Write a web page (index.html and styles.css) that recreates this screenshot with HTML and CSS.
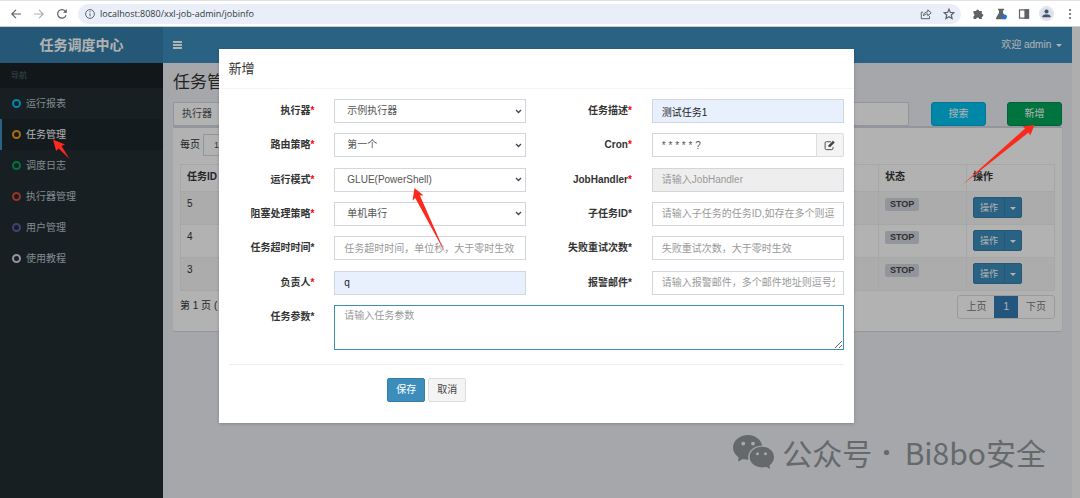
FILE: index.html
```html
<!DOCTYPE html>
<html lang="zh-CN">
<head>
<meta charset="utf-8">
<title>任务调度中心</title>
<link rel="stylesheet" href="styles.css">
</head>
<body>
<header class="browser">
  <button class="tool" type="button" aria-label="Back"><svg viewBox="0 0 12 12"><path d="M11 6H2M6 1.8 1.8 6 6 10.2"/></svg></button>
  <button class="tool tool-off" type="button" aria-label="Forward"><svg viewBox="0 0 12 12"><path d="M1 6h9M6 1.8 10.2 6 6 10.2"/></svg></button>
  <button class="tool" type="button" aria-label="Reload"><svg viewBox="0 0 12 12"><path d="M10 7.2A4.3 4.3 0 1 1 9.2 3.1L10.4 4.4"/><path d="M10.8 1v3.8H7z" fill="#5f6368" stroke="none"/></svg></button>
  <div class="address">
    <svg class="info" viewBox="0 0 12 12"><circle cx="6" cy="6" r="4.4"/><path d="M6 5.4v3M6 3.2v1.2"/></svg>
    <input class="url" type="text" aria-label="Address" value="localhost:8080/xxl-job-admin/jobinfo">
    <button class="tool" type="button" aria-label="Share"><svg class="thin" viewBox="0 0 12 12"><path d="M3 4.2H1.3v6.500h8.200V8.200M3.400 8c.2-2.800 1.800-4.200 4.400-4.200V1.800l3.400 3-3.400 3V5.900C5.800 5.900 4.400 6.600 3.400 8z"/></svg></button>
    <button class="tool" type="button" aria-label="Bookmark"><svg viewBox="0 0 12 12"><path d="M6 1.200l1.400 3.200 3.500.3-2.600 2.300.8 3.500L6 8.700l-3.100 1.800.8-3.500L1.100 4.700l3.500-.3z"/></svg></button>
  </div>
  <div class="extensions">
    <button class="tool" type="button" aria-label="Extensions"><svg viewBox="0 0 12 12"><path fill="#5f6368" stroke="none" d="M1.500 3h2.700a1.500 1.500 0 1 1 3 0h2.600v2.700a1.500 1.500 0 1 1 0 3V11H7.200a1.500 1.500 0 0 0-3 0H1.500V8.300a1.500 1.500 0 0 0 0-2.800z"/></svg></button>
    <button class="tool" type="button" aria-label="Labs"><svg viewBox="0 0 12 12"><path fill="#5f6368" stroke="none" d="M3 .8h6v1.400H8v2.600l3 5.200c.3.600 0 1.200-.6 1.200H1.600C1 11.200.7 10.600 1 10l3-5.200V2.200H3z"/><circle cx="9.600" cy="8.800" r="2.400" fill="#1a73e8" stroke="none"/></svg></button>
    <button class="tool" type="button" aria-label="Side panel"><svg viewBox="0 0 12 12"><path d="M1.500 1.800h9v8.400h-9z"/><path d="M7 1.800h3.500v8.400H7z" fill="#5f6368"/></svg></button>
    <button class="tool profile" type="button" aria-label="Profile"><svg viewBox="0 0 12 12"><g fill="#45546b" stroke="none"><circle cx="6" cy="3.800" r="2.200"/><path d="M1.600 10.200V9c0-1.500 2.600-2.300 4.400-2.300s4.400.8 4.400 2.300v1.200z"/></g></svg></button>
    <button class="tool" type="button" aria-label="Menu"><svg viewBox="0 0 12 12"><g fill="#5f6368" stroke="none"><circle cx="6" cy="2" r="1.100"/><circle cx="6" cy="6" r="1.100"/><circle cx="6" cy="10" r="1.100"/></g></svg></button>
  </div>
</header>

<div class="app">
  <aside class="sidebar">
    <a class="logo" href="#">任务调度中心</a>
    <div class="nav-title">导航</div>
    <nav class="nav">
      <a class="nav-item" href="#"><i class="ring ring-aqua"></i>运行报表</a>
      <a class="nav-item active" href="#"><i class="ring ring-yellow"></i>任务管理</a>
      <a class="nav-item" href="#"><i class="ring ring-green"></i>调度日志</a>
      <a class="nav-item" href="#"><i class="ring ring-red"></i>执行器管理</a>
      <a class="nav-item" href="#"><i class="ring ring-purple"></i>用户管理</a>
      <a class="nav-item" href="#"><i class="ring ring-gray"></i>使用教程</a>
    </nav>
  </aside>
  <div class="main">
    <div class="navbar">
      <button class="burger" type="button" aria-label="Toggle navigation"><i></i><i></i><i></i></button>
      <a class="user" href="#">欢迎 admin <i class="caret"></i></a>
    </div>
    <div class="content">
      <h1 class="title">任务管理</h1>
      <div class="filters">
        <div class="filter"><span class="addon">执行器</span></div>
        <button class="btn btn-search" type="button">搜索</button>
        <button class="btn btn-add" type="button">新增</button>
      </div>
      <section class="box">
        <div class="length"><label for="size">每页</label><select id="size" class="size"><option>10</option></select></div>
        <table class="jobs">
          <thead><tr><th class="col-id">任务ID</th><th></th><th class="col-state">状态</th><th class="col-op">操作</th></tr></thead>
          <tbody>
            <tr><td>5</td><td></td><td><span class="badge">STOP</span></td><td><div class="group"><button class="op" type="button">操作</button><button class="op op-more" type="button" aria-label="更多"><i class="caret"></i></button></div></td></tr>
            <tr><td>4</td><td></td><td><span class="badge">STOP</span></td><td><div class="group"><button class="op" type="button">操作</button><button class="op op-more" type="button" aria-label="更多"><i class="caret"></i></button></div></td></tr>
            <tr><td>3</td><td></td><td><span class="badge">STOP</span></td><td><div class="group"><button class="op" type="button">操作</button><button class="op op-more" type="button" aria-label="更多"><i class="caret"></i></button></div></td></tr>
          </tbody>
        </table>
        <div class="table-foot">
          <span>第 1 页 (</span>
          <div class="pages"><a href="#">上页</a><a class="current" href="#">1</a><a href="#">下页</a></div>
        </div>
      </section>
    </div>
  </div>
  <div class="scrollbar"></div>
  <div class="backdrop"></div>

  <div class="modal" role="dialog" aria-labelledby="modal-title">
    <h2 class="modal-title" id="modal-title">新增</h2>
    <form class="form">
      <div class="fields">
        <label for="f1">执行器<b>*</b></label>
        <div class="cell"><select id="f1" class="control"><option>示例执行器</option></select></div>
        <label for="f2">任务描述<b>*</b></label>
        <div class="cell"><input id="f2" class="control filled" type="text" value="测试任务1"></div>

        <label for="f3">路由策略<b>*</b></label>
        <div class="cell"><select id="f3" class="control"><option>第一个</option></select></div>
        <label for="f4">Cron<b>*</b></label>
        <div class="cell cron"><input id="f4" class="control" type="text" value="* * * * * ?"><button class="edit" type="button" aria-label="编辑"><svg viewBox="0 0 12 12"><path d="M7.500 1.900H2.500A1.300 1.300 0 0 0 1.200 3.200v6a1.300 1.300 0 0 0 1.300 1.300h6A1.300 1.300 0 0 0 9.800 9.200V7.600"/><path fill="#444" stroke="none" d="M9.800.8l1.900 1.900-4.900 4.900H4.900V5.700z"/></svg></button></div>

        <label for="f5">运行模式<b>*</b></label>
        <div class="cell"><select id="f5" class="control"><option>GLUE(PowerShell)</option></select></div>
        <label for="f6">JobHandler<b>*</b></label>
        <div class="cell"><input id="f6" class="control" type="text" placeholder="请输入JobHandler" disabled></div>

        <label for="f7">阻塞处理策略<b>*</b></label>
        <div class="cell"><select id="f7" class="control"><option>单机串行</option></select></div>
        <label for="f8">子任务ID*</label>
        <div class="cell"><input id="f8" class="control" type="text" placeholder="请输入子任务的任务ID,如存在多个则逗号分隔"></div>

        <label for="f9">任务超时时间*</label>
        <div class="cell"><input id="f9" class="control" type="text" placeholder="任务超时时间，单位秒，大于零时生效"></div>
        <label for="f10">失败重试次数*</label>
        <div class="cell"><input id="f10" class="control" type="text" placeholder="失败重试次数，大于零时生效"></div>

        <label for="f11">负责人<b>*</b></label>
        <div class="cell"><input id="f11" class="control filled" type="text" value="q"></div>
        <label for="f12">报警邮件*</label>
        <div class="cell"><input id="f12" class="control" type="text" placeholder="请输入报警邮件，多个邮件地址则逗号分隔"></div>
      </div>
      <div class="fields params">
        <label for="f13">任务参数*</label>
        <div class="cell wide"><textarea id="f13" class="control area" placeholder="请输入任务参数"></textarea></div>
      </div>
      <hr class="rule">
      <div class="actions">
        <button class="save" type="button">保存</button>
        <button class="cancel" type="button">取消</button>
      </div>
    </form>
  </div>

  <div class="watermark">
    <svg class="wechat" viewBox="0 0 42 34"><path fill="#66696b" d="M15 0C6.700 0 0 5.600 0 12.600c0 4 2.200 7.500 5.600 9.800L5 26.500l5-2.500c1.600.5 3.400.8 5.300.8C14 17 20 10.900 29.200 10.600 28 4.500 22 0 15 0z"/><path fill="#66696b" d="M29 11.800c-7 0-12.400 4.700-12.400 10.300S22 32.400 29 32.400c1.400 0 2.800-.2 4-.6l4.200 2.200-.8-3.600c2.900-1.900 4.600-4.900 4.600-8.300 0-5.600-5-10.300-12-10.300z"/><g fill="#a8abae"><circle cx="10.300" cy="8.600" r="1.900"/><circle cx="20" cy="8.600" r="1.900"/><circle cx="24.500" cy="18.800" r="1.500"/><circle cx="32.500" cy="18.800" r="1.500"/></g></svg>
    <span>公众号</span><span class="dot">·</span><span>Bi8bo安全</span>
  </div>
</div>

<svg class="arrows" viewBox="0 0 1080 498" width="1080" height="498" aria-hidden="true">
  <g fill="#fb2a1c">
    <path d="M53 139.500l12 5-3.400 1.400L69.500 159 58.700 148.400l-2.600 2.600z"/>
    <path d="M414.500 188l9 7.400-3.600.2L445.500 253.500 415.200 198l-2.700 2.800z"/>
    <path d="M1034.500 125l-4.200 10.600-1.800-3L962 185l63-56.400-2.300-2.400z"/>
  </g>
</svg>
</body>
</html>
```
FILE: styles.css
```css
* { box-sizing: border-box; }
body {
  margin: 0;
  min-height: 100vh;
  display: flex;
  flex-direction: column;
  font: 10px/14px "Liberation Sans", "Noto Sans CJK SC", sans-serif;
  color: #333;
  background: #fff;
}
button, input, select, textarea { font: inherit; color: inherit; margin: 0; }
a { color: inherit; text-decoration: none; }
svg { fill: none; stroke: #5f6368; stroke-width: 1.2; }

/* Browser toolbar */
.browser {
  display: flex;
  align-items: center;
  height: 27px;
  padding: 0 4px 0 9px;
  gap: 10px;
  border-top: 1px solid #dee1e6;
  border-bottom: 1px solid #c8cbd0;
}
.tool { display: flex; width: 13px; height: 13px; padding: 0; border: 0; background: none; align-items: center; justify-content: center; flex: none; }
.tool svg { width: 12px; height: 12px; }
.tool .thin { stroke-width: 1; }
.tool-off { opacity: .5; }
.address {
  flex: 1;
  display: flex;
  align-items: center;
  gap: 10px;
  height: 20px;
  padding: 0 6px;
  border-radius: 10px;
  background: #e9eef9;
}
.info { width: 12px; height: 12px; stroke-width: 1; }
.url { flex: 1; min-width: 0; margin-left: -6px; padding: 0; border: 0; background: none; color: #33363a; font-family: "Open Sans", sans-serif; font-size: 9px; }
.extensions { display: flex; gap: 10px; }
.profile { border-radius: 50%; background: #dbe0ea; outline: 1px solid #dbe0ea; }
.profile svg { width: 11px; height: 11px; }

/* Application frame */
.app { position: relative; flex: 1; display: flex; background: #ecf0f5; }
.sidebar { width: 163px; background: #222d32; color: #b8c7ce; }
.logo {
  display: flex;
  height: 36px;
  align-items: center;
  justify-content: center;
  background: #367fa9;
  color: #fff;
  font-size: 14px;
  font-weight: bold;
}
.nav-title { padding: 6px 11px; height: 25px; line-height: 14px; font-size: 8px; color: #4b646f; background: #1a2226; }
.nav-item { display: flex; align-items: center; height: 31px; padding-left: 10px; gap: 5px; border-left: 2px solid transparent; }
.nav-item.active { color: #fff; background: #1e282c; border-color: #3c8dbc; }
.ring { width: 9px; height: 9px; border: 2px solid; border-radius: 50%; }
.ring-aqua { color: #00c0ef; }
.ring-yellow { color: #f39c12; }
.ring-green { color: #00a65a; }
.ring-red { color: #dd4b39; }
.ring-purple { color: #605ca8; }
.ring-gray { color: #d2d6de; }

.main { flex: 1; min-width: 0; }
.navbar { display: flex; height: 36px; align-items: center; justify-content: space-between; padding: 0 10px; background: #3c8dbc; color: #fff; }
.burger { display: flex; flex-direction: column; gap: 1px; width: 9px; padding: 0; border: 0; background: none; }
.burger i { height: 2px; background: #fff; }
.caret { display: inline-block; margin-left: 2px; border: 3px solid transparent; border-top-color: currentColor; border-bottom: 0; vertical-align: middle; }
.content { padding: 8px 10px; }
.title { margin: 0; font-size: 17px; line-height: 24px; font-weight: normal; }
.filters { display: flex; align-items: stretch; height: 24px; margin-top: 7px; }
.filter { flex: 1; margin-right: 22px; background: #fff; border: 1px solid #d2d6de; }
.addon { display: block; padding: 4px 8px; color: #555; }
.btn { width: 55px; padding: 0; border: 1px solid #00acd6; border-radius: 3px; color: #fff; background: #00c0ef; }
.btn-add { margin-left: 21px; background: #00a65a; border-color: #008d4c; }

.box { padding: 6px 7px 12px; border-top: 2px solid #d2d6de; border-radius: 2px; background: #fff; box-shadow: 0 1px 1px rgba(0, 0, 0, .1); }
.length { display: flex; align-items: center; gap: 3px; height: 22px; }
.size { width: 50px; height: 22px; padding: 0 10px; border: 1px solid #d2d6de; background: #fff; color: #555; font-size: 9px; appearance: none; }
.jobs { width: 100%; margin-top: 8px; border-collapse: collapse; table-layout: fixed; }
.jobs th, .jobs td { padding: 5px 6px; border: 1px solid #f0f0f0; text-align: left; vertical-align: top; }
.jobs th { height: 27px; }
.jobs td { height: 33px; }
.jobs tbody tr:nth-child(odd) { background: #f7f7f7; }
.col-id { width: 80px; }
.col-state { width: 88px; }
.col-op { width: 88px; }
.badge { display: inline-block; padding: 0 5px; border-radius: 2px; line-height: 13px; margin-top: 1px; font-size: 9px; font-weight: bold; color: #444; background: #d2d6de; }
.group { display: flex; }
.op { width: 32px; height: 21px; padding: 0; font-size: 9px; color: #fff; background: #3c8dbc; border: 1px solid #367fa9; border-radius: 2px 0 0 2px; }
.op-more { width: 18px; margin-left: -1px; border-radius: 0 2px 2px 0; }
.op .caret { margin: 0; }
.table-foot { display: flex; justify-content: space-between; margin-top: 4px; line-height: 22px; }
.pages { display: flex; border: 1px solid #ddd; border-radius: 3px; color: #777; }
.pages a { padding: 0 8px; }
.pages .current { padding: 0 9px; color: #fff; background: #337ab7; }

.scrollbar { width: 8px; background: #fafafa; }
.backdrop { position: absolute; inset: 0; background: rgba(0, 0, 0, .3); }

/* Dialog */
.modal {
  position: absolute;
  top: 22px;
  left: 0;
  right: 8px;
  width: 635px;
  margin: 0 auto;
  background: #fff;
  box-shadow: 0 1px 3px rgba(0, 0, 0, .2);
}
.modal-title { margin: 0; padding: 10px; font-size: 13px; line-height: 19px; font-weight: normal; border-bottom: 1px solid #f4f4f4; }
.form { padding-top: 10px; }
.fields { display: grid; grid-template-columns: 2fr 4fr 2fr 4fr; grid-template-rows: repeat(6, 1fr); min-height: 206px; }
.fields label { padding: 5px 10px 0; text-align: right; font-weight: bold; white-space: nowrap; }
.fields b { color: #f00; }
.cell { min-width: 0; padding: 0 10px; }
.control { display: block; width: 100%; height: 24px; padding: 0 8px 0 9px; border: 1px solid #d2d6de; border-radius: 0; background: #fff; color: #555; outline: 0; }
.control::placeholder { color: #999; }
.control:disabled { background: #eee; }
.filled { background: #e8f0fe; color: #222; }
select.control {
  appearance: none;
  padding-left: 12px;
  background: #fff url("data:image/svg+xml,%3Csvg xmlns='http://www.w3.org/2000/svg' width='7' height='5'%3E%3Cpath d='M1 1l2.500 2.500L6 1' fill='none' stroke='%23444' stroke-width='1.300'/%3E%3C/svg%3E") no-repeat right 3px center;
}
.cron { display: flex; }
.cron .control { flex: 1; min-width: 0; }
.edit { display: flex; align-items: center; justify-content: center; width: 28px; height: 24px; margin-left: -1px; padding: 0; border: 1px solid #ddd; background: #f4f4f4; border-radius: 0 2px 2px 0; }
.edit svg { width: 11px; height: 11px; stroke: #444; stroke-width: 1; }
.params { grid-template-rows: auto; min-height: 0; }
.wide { grid-column: span 3; }
.area { height: 45px; padding: 3px 9px; border-color: #3c8dbc; resize: vertical; }
.rule { margin: 14px 10px 13px; border: 0; border-top: 1px solid #eee; }
.actions { display: flex; gap: 3px; padding: 0 10px 21px calc(25% + 10px); }
.save, .cancel { width: 38px; height: 24px; padding: 0; border: 1px solid #ddd; border-radius: 2px; background: #f4f4f4; color: #444; }
.save { background: #3c8dbc; border-color: #367fa9; color: #fff; }

.watermark {
  position: absolute;
  right: 34px;
  bottom: 24px;
  display: flex;
  align-items: center;
  gap: 7px;
  font: 30px/44px "Noto Sans CJK SC", sans-serif;
  color: #66696b;
}
.dot { margin: 0 7px 0 3px; font-family: "Noto Sans", sans-serif; font-weight: bold; }
.wechat { width: 42px; height: 34px; stroke: none; }
.arrows { position: absolute; top: 0; left: 0; stroke: none; pointer-events: none; }
```
